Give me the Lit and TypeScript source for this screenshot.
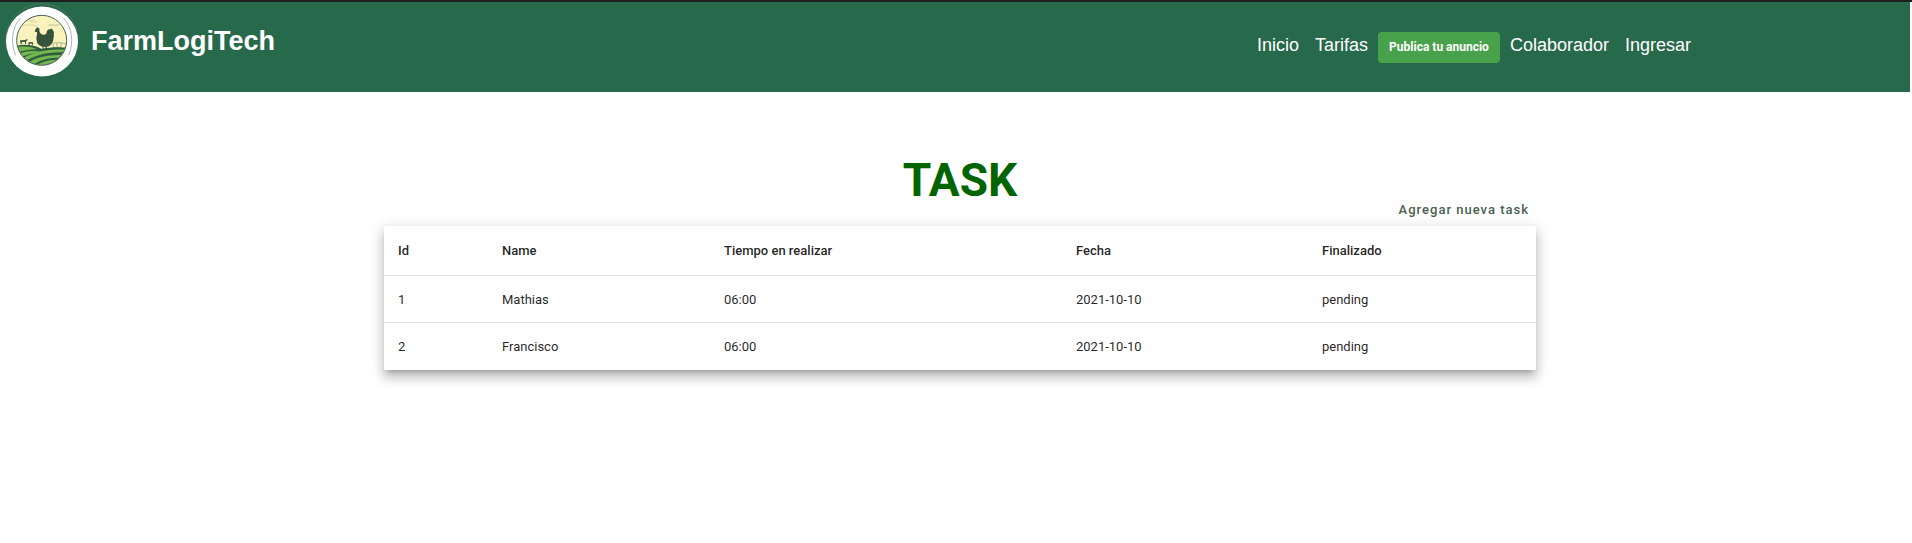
import { LitElement, html, css } from "lit";
import { customElement, state } from "lit/decorators.js";

interface Task {
  id: number;
  name: string;
  time: string;
  date: string;
  status: string;
}

@customElement("farm-logo")
class FarmLogo extends LitElement {
  static styles = css`
    :host {
      display: block;
      flex: none;
    }
    .logo {
      display: block;
      width: 74px;
      height: 74px;
    }
  `;

  render() {
    return html`
      <svg class="logo" viewBox="17 9 222 222" role="img" aria-label="FarmLogiTech">
        <defs>
          <clipPath id="scene"><circle cx="127" cy="121" r="74" /></clipPath>
        </defs>
        <circle cx="128" cy="119" r="108" fill="none" stroke="#4e7560" stroke-width="3" />
        <ellipse cx="128" cy="124.500" rx="108" ry="105" fill="#fff" />
        <path d="M64 54C39 78 32 126 49 166M192 54C217 78 225 126 208 166" fill="none" stroke="#87938f" stroke-width="2" />
        <g clip-path="url(#scene)">
          <rect x="50" y="44" width="154" height="154" fill="#faf3bd" />
          <path d="M82 61h26M64 78q22-7 50-1M146 74h34M150 77h30M92 66h20" fill="none" stroke="#c9c79b" stroke-width="2" />
          <g fill="#faf3bd" stroke="#8a966c" stroke-width="2">
            <circle cx="169" cy="136" r="8" />
            <circle cx="180" cy="135" r="8" />
            <circle cx="192" cy="137" r="8" />
          </g>
          <path d="M50 137C78 131 108 136 126 146C151 142 179 139 206 144V200H50Z" fill="#2d5f3f" />
          <path d="M51 141C79 137 100 141 113 148C89 148 69 152 52 159Z" fill="#75b84f" />
          <path d="M54 164C78 152 105 151 128 156C103 158 76 165 59 174Z" fill="#75b84f" />
          <path d="M63 181C96 155 151 145 205 150V158C150 153 105 164 72 188Z" fill="#75b84f" />
          <path d="M83 191C111 169 157 162 202 166L197 174C154 170 122 178 101 195Z" fill="#75b84f" />
          <path d="M111 196C132 182 163 177 193 180L181 188C160 186 144 190 131 197Z" fill="#75b84f" />
          <path d="M62 121l17-1 4-4 2 4-4 3-1 9h-3v-6h-9l-1 7h-3zM87 127l12-1 3 3-2 6h-2v-4h-7v4h-3z" fill="#3f593f" />
          <path d="M108 92C106 88 109 86 111 86C111 82 114 80 117 84C121 84 121 88 120 92C122 101 128 105 135 104C143 103 141 94 145 90C149 85 152 90 155 86C158 85 160 89 161 92C165 94 164 99 163 103C166 109 161 113 162 119C160 132 151 139 143 140L142 146L147 149H137L139 140H132L134 147L139 149H127L131 146L129 140C117 136 111 129 112 119C109 113 114 108 113 96L106 96Z" fill="#35543b" />
        </g>
        <circle cx="127" cy="121" r="75" fill="none" stroke="#455f4b" stroke-width="3" />
      </svg>
    `;
  }
}

@customElement("app-root")
class AppRoot extends LitElement {
  static styles = css`
    :host {
      display: block;
      background: #fff;
      font-family: Roboto, "Liberation Sans", sans-serif;
      color: rgba(0, 0, 0, 0.87);
    }
    .header {
      display: flex;
      align-items: flex-start;
      justify-content: space-between;
      box-sizing: border-box;
      height: 90px;
      margin-right: 2px;
      background: #27694b;
      font-family: "Liberation Sans", Arial, sans-serif;
    }
    .frame {
      border-top: 2px solid #1c1f1e;
    }
    .brand {
      display: flex;
      align-items: center;
      gap: 12px;
      padding: 1px 0 0 5px;
      color: #fff;
      font-size: 27px;
      font-weight: 700;
      line-height: 32px;
      text-decoration: none;
    }
    .brand-name {
      padding-top: 2px;
    }
    .nav {
      display: flex;
      align-items: flex-start;
      padding: 30px 219px 0 0;
    }
    .link {
      margin-right: 16px;
      color: #fff;
      font-size: 18px;
      line-height: 26px;
      text-decoration: none;
    }
    .link.tight {
      margin-right: 10px;
    }
    .link:last-child {
      margin-right: 0;
    }
    .publish {
      height: 31px;
      margin-right: 10px;
      padding: 0 11px;
      border: 0;
      border-radius: 4px;
      background: #48a14b;
      color: #fff;
      font: 700 12px/31px Roboto, sans-serif;
      cursor: pointer;
    }
    .main {
      padding: 59px 0 32px 8px;
    }
    .content {
      display: flex;
      flex-direction: column;
      max-width: 1152px;
      margin: 0 auto;
    }
    .title {
      margin: 0;
      color: #006400;
      font-size: 46px;
      font-weight: 700;
      line-height: 58px;
      text-align: center;
    }
    .add {
      align-self: flex-end;
      height: 18px;
      padding: 0 7px;
      margin: -8px 0 7px;
      border: 0;
      background: none;
      color: #48604f;
      font: 500 13px/18px Roboto, sans-serif;
      letter-spacing: 1px;
      cursor: pointer;
    }
    .tasks {
      width: 100%;
      table-layout: fixed;
      border-collapse: separate;
      border-spacing: 0;
      background: #fff;
      font-size: 13px;
      line-height: 20px;
      box-shadow: 0 5px 5px -3px rgba(0, 0, 0, 0.2),
        0 8px 10px 1px rgba(0, 0, 0, 0.14), 0 3px 14px 2px rgba(0, 0, 0, 0.12);
    }
    .col-id {
      width: 104px;
    }
    .col-name {
      width: 222px;
    }
    .col-time {
      width: 352px;
    }
    .col-date {
      width: 246px;
    }
    .col-status {
      width: 228px;
    }
    .cell {
      box-sizing: border-box;
      height: 47px;
      padding: 1px 14px 0;
      border-bottom: 1px solid #dfdfdf;
      text-align: left;
      font-weight: 400;
    }
    .cell.head {
      height: 50px;
      padding-top: 0;
      font-weight: 500;
    }
    .row:last-child .cell {
      border-bottom: 0;
    }
  `;

  @state()
  private tasks: Task[] = [
    { id: 1, name: "Mathias", time: "06:00", date: "2021-10-10", status: "pending" },
    { id: 2, name: "Francisco", time: "06:00", date: "2021-10-10", status: "pending" },
  ];

  private columns = ["Id", "Name", "Tiempo en realizar", "Fecha", "Finalizado"];

  render() {
    return html`
      <div class="frame">
        <header class="header">
          <a class="brand" href="#"><farm-logo></farm-logo><span class="brand-name">FarmLogiTech</span></a>
          <nav class="nav">
            <a class="link" href="#">Inicio</a>
            <a class="link tight" href="#">Tarifas</a>
            <button class="publish" type="button">Publica tu anuncio</button>
            <a class="link" href="#">Colaborador</a>
            <a class="link" href="#">Ingresar</a>
          </nav>
        </header>
      </div>
      <main class="main">
        <div class="content">
          <h1 class="title">TASK</h1>
          <button class="add" type="button">Agregar nueva task</button>
          <table class="tasks">
            <colgroup>
              <col class="col-id" />
              <col class="col-name" />
              <col class="col-time" />
              <col class="col-date" />
              <col class="col-status" />
            </colgroup>
            <thead>
              <tr>
                ${this.columns.map((c) => html`<th class="cell head" scope="col">${c}</th>`)}
              </tr>
            </thead>
            <tbody>
              ${this.tasks.map(
                (t) => html`<tr class="row">
                  <td class="cell">${t.id}</td>
                  <td class="cell">${t.name}</td>
                  <td class="cell">${t.time}</td>
                  <td class="cell">${t.date}</td>
                  <td class="cell">${t.status}</td>
                </tr>`
              )}
            </tbody>
          </table>
        </div>
      </main>
    `;
  }
}
